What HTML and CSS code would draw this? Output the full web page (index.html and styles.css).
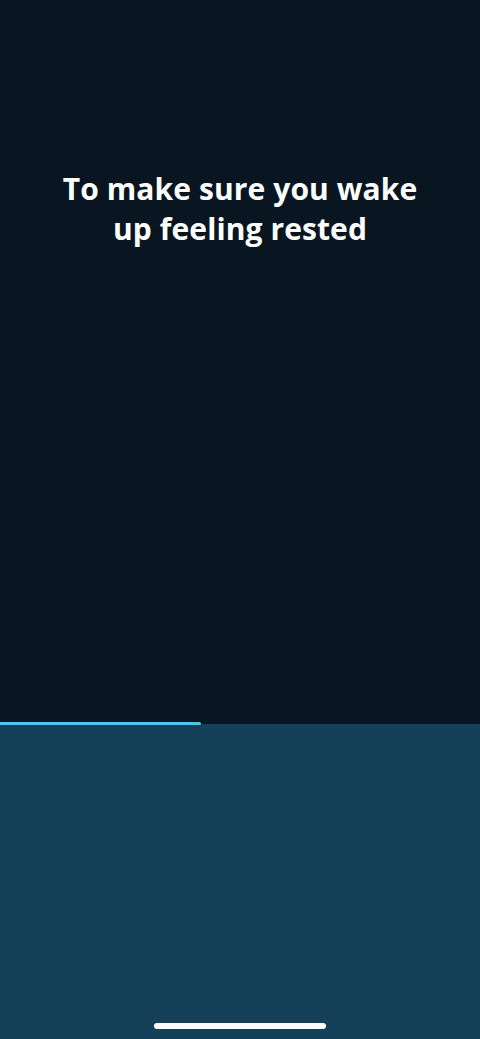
FILE: index.html
```html
<!DOCTYPE html>
<html lang="en">
<head>
<meta charset="utf-8">
<title>Wake up rested</title>
<link rel="stylesheet" href="styles.css">
</head>
<body>
<div class="screen">
  <section class="top">
    <h1 class="headline">To make sure you wake<br>up feeling rested</h1>
  </section>
  <section class="panel">
    <div class="progress"><div class="progress-fill" style="width:201px"></div></div>
    <div class="spacer"></div>
    <div class="home-indicator"></div>
  </section>
</div>
</body>
</html>
```
FILE: styles.css
```css
html, body {
  margin: 0;
  padding: 0;
  background: #091621;
}
.screen {
  width: 480px;
  height: 1039px;
  display: flex;
  flex-direction: column;
  overflow: hidden;
}
.top {
  height: 724px;
  background: #091621;
  padding-top: 169px;
  box-sizing: border-box;
}
.headline {
  margin: 0;
  color: #ffffff;
  font-family: "Open Sans", "Lato", sans-serif;
  font-weight: 700;
  font-size: 30px;
  line-height: 40px;
  text-align: center;
  letter-spacing: 0.1px;
}
.panel {
  flex: 1;
  background: #14405a;
  display: flex;
  flex-direction: column;
  align-items: center;
  position: relative;
}
.progress {
  position: absolute;
  top: -2px;
  left: 0;
  width: 100%;
  height: 3px;
}
.progress-fill {
  height: 3px;
  background: #4cc3ec;
  border-radius: 0 2px 2px 0;
}
.spacer {
  flex: 1;
}
.home-indicator {
  width: 172px;
  height: 6px;
  border-radius: 3px;
  background: #ffffff;
  margin-bottom: 10px;
}
```
